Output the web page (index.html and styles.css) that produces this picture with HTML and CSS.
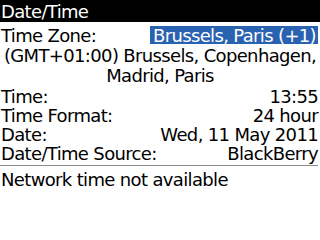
FILE: index.html
```html
<!DOCTYPE html>
<html>
<head>
<meta charset="utf-8">
<link rel="stylesheet" href="styles.css">
</head>
<body>
<div class="screen">
  <div class="title">Date/Time</div>
  <div class="row field-tz">
    <span class="label">Time Zone:</span>
    <span class="value selected">Brussels, Paris (+1)</span>
  </div>
  <div class="desc">(GMT+01:00) Brussels, Copenhagen,<br>Madrid, Paris</div>
  <div class="row"><span class="label">Time:</span><span class="value">13:55</span></div>
  <div class="row"><span class="label">Time Format:</span><span class="value">24 hour</span></div>
  <div class="row"><span class="label">Date:</span><span class="value">Wed, 11 May 2011</span></div>
  <div class="row"><span class="label">Date/Time Source:</span><span class="value">BlackBerry</span></div>
  <div class="sep"></div>
  <div class="note">Network time not available</div>
</div>
</body>
</html>
```

FILE: styles.css
```css
html, body {
  margin: 0;
  padding: 0;
  background: #fff;
}
.screen {
  width: 320px;
  height: 240px;
  overflow: hidden;
  font-family: "DejaVu Sans", sans-serif;
  font-size: 18px;
  letter-spacing: -0.65px;
  line-height: 19px;
  color: #000;
}
.title {
  background: #000;
  color: #fff;
  height: 22px;
  line-height: 24px;
  padding-left: 1px;
}
.row {
  display: flex;
  justify-content: space-between;
  padding: 0 2px 0 1px;
  height: 19px;
}
.field-tz {
  margin-top: 4px;
  padding-right: 2px;
}
.selected {
  background: #2a62b2;
  color: #fff;
  padding: 0 2px 0 3px;
  height: 18px;
}
.desc {
  text-align: center;
  padding: 0 2px;
  line-height: 20px;
  margin: 1px 0 1px;
}
.sep {
  height: 1px;
  background: #8c8c8c;
  margin: 2px 2px 0 0;
}
.note {
  padding-left: 1px;
  margin-top: 4px;
}
```
